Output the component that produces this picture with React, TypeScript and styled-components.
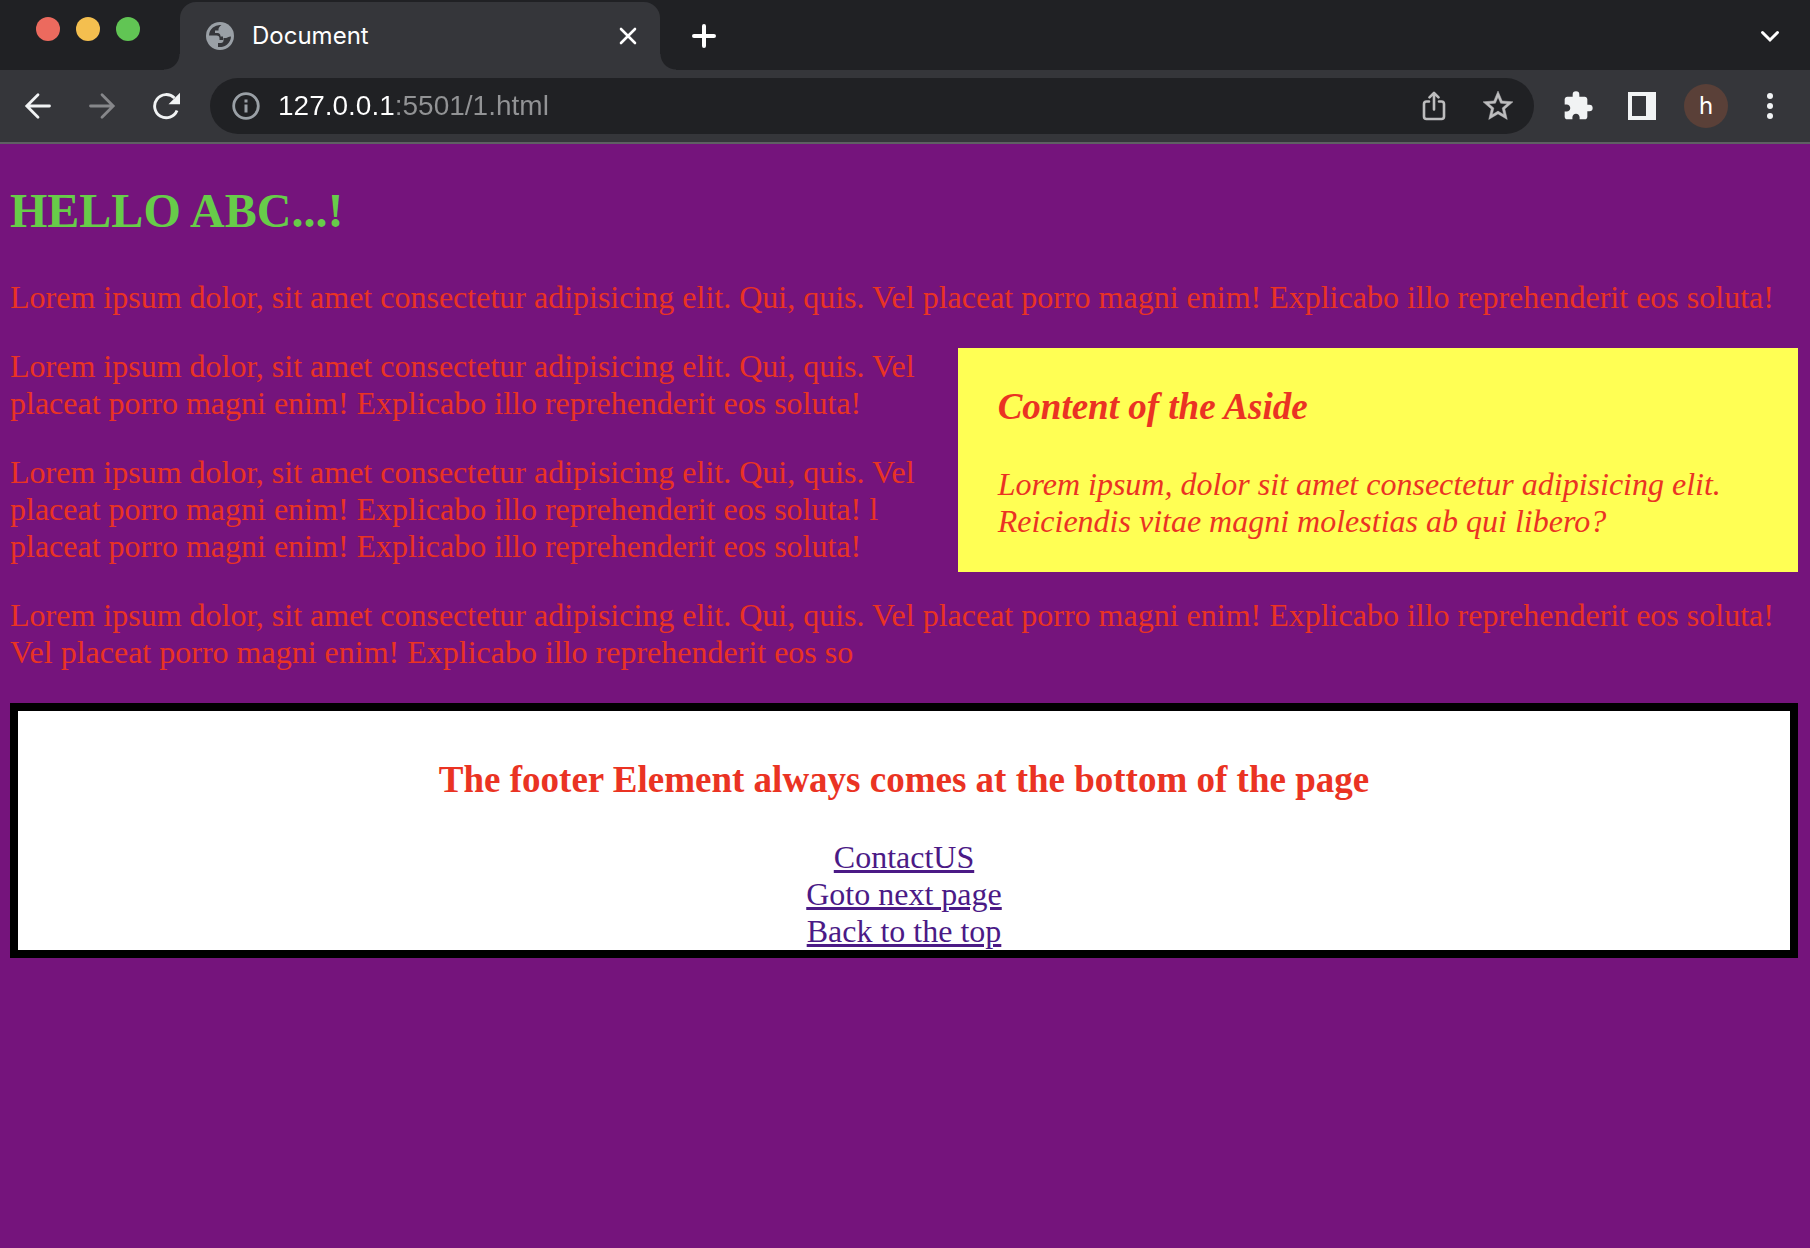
import React from "react";
import styled, { createGlobalStyle } from "styled-components";

const ui = '"Inter", "Liberation Sans", sans-serif';
const serif = '"Liberation Serif", "Times New Roman", serif';

const GlobalStyle = createGlobalStyle`
  *, *::before, *::after { box-sizing: border-box; }
  body { margin: 0; background: #75147c; }
`;

const TabStrip = styled.header`
  display: flex;
  height: 70px;
  background: #202124;
`;

const WindowControls = styled.div`
  display: flex;
  flex: none;
  gap: 16px;
  width: 180px;
  padding: 17px 0 0 36px;
`;

const Light = styled.button<{ $color: string }>`
  width: 24px;
  height: 24px;
  padding: 0;
  border: 0;
  border-radius: 50%;
  background: ${(p) => p.$color};
`;

const Tab = styled.div`
  position: relative;
  display: flex;
  align-items: center;
  flex: 0 1 480px;
  margin-top: 2px;
  padding: 0 12px 0 26px;
  border-radius: 16px 16px 0 0;
  background: #35363a;

  &::before,
  &::after {
    content: "";
    position: absolute;
    bottom: 0;
    width: 16px;
    height: 16px;
  }
  &::before {
    right: 100%;
    background: radial-gradient(circle at 0 0, #202124 15px, #35363a 16px);
  }
  &::after {
    left: 100%;
    background: radial-gradient(circle at 100% 0, #202124 15px, #35363a 16px);
  }
`;

const TabTitle = styled.span`
  flex: 1;
  margin-left: 18px;
  font: 400 24px/32px ${ui};
  color: #fff;
`;

const IconButton = styled.button<{ $width?: number; $color?: string }>`
  display: flex;
  align-items: center;
  justify-content: center;
  flex: none;
  width: ${(p) => p.$width ?? 64}px;
  height: 56px;
  padding: 0;
  border: 0;
  background: none;
  color: ${(p) => p.$color ?? "#f1f3f4"};
`;

const StripActions = styled.div`
  display: flex;
  flex: 1;
  align-items: center;
  justify-content: space-between;
  padding: 2px 8px 0 16px;
`;

const Toolbar = styled.nav`
  display: flex;
  align-items: center;
  height: 74px;
  padding: 0 8px 0 6px;
  border-bottom: 2px solid #5f6063;
  background: #35363a;
`;

const AddressBar = styled.form`
  display: flex;
  align-items: center;
  flex: 1;
  min-width: 0;
  height: 56px;
  margin: 0 12px;
  padding: 0 4px;
  border-radius: 28px;
  background: #202124;
`;

/* The host part of the address is white, the port and path are grey. */
const AddressInput = styled.input`
  flex: 1;
  min-width: 0;
  height: 36px;
  padding: 0;
  border: 0;
  outline: 0;
  font: 400 28px/36px "Liberation Sans", Arial, sans-serif;
  color: #9a9b9d;
  background: linear-gradient(to right, #fff 118px, #929395 118px);
  background-clip: text;
  -webkit-background-clip: text;
  -webkit-text-fill-color: transparent;
`;

const Avatar = styled.span`
  display: flex;
  align-items: center;
  justify-content: center;
  width: 44px;
  height: 44px;
  border-radius: 50%;
  background: #5a4038;
  font: 400 24px/32px ${ui};
  color: #fff;
`;

const Page = styled.main`
  padding: 0 12px 32px 10px;
  font: 400 32px/37px ${serif};
  color: #ea3323;
`;

const Title = styled.h1`
  margin: 0;
  padding: 39px 0 41px;
  font: 700 48px/55px ${serif};
  color: #67cc49;
`;

const Paragraph = styled.p`
  margin: 0 0 32px;
`;

const Subtitle = styled.h2`
  margin: 0;
  padding: 37px 0 38px;
  font-size: 37px;
  line-height: 43px;
  font-weight: 700;
`;

const Aside = styled.aside`
  float: right;
  width: 47%;
  padding: 0 40px;
  background: #ffff54;
  font-style: italic;
  display: flow-root;
`;

const Footer = styled.footer`
  clear: both;
  display: flex;
  flex-direction: column;
  align-items: center;
  padding-top: 10px;
  border: 8px solid #000;
  background: #fff;
  text-align: center;
`;

const FooterLink = styled.a`
  color: #4b1a86;
  text-decoration: underline;
`;

const LOREM =
  "Lorem ipsum dolor, sit amet consectetur adipisicing elit. Qui, quis. Vel placeat porro magni enim! Explicabo illo reprehenderit eos soluta!";

const LINKS = [
  { label: "ContactUS", href: "#contact" },
  { label: "Goto next page", href: "#next" },
  { label: "Back to the top", href: "#top" },
];

const GlobeIcon = () => (
  <svg width="28" height="28" viewBox="0 0 28 28" aria-hidden="true">
    <circle cx="14" cy="14" r="14" fill="#9aa0a6" />
    <path
      d="M15.500 3A11 11 0 0 0 3 13.500H10.500c2 0 3 1.200 3 3v1.500h3.500v-3.500h-2.500c0-2-1-3.500-3-3.500H9V8.500h3.500V7c0-1 1-2.500 3-4zM25 14.500A11 11 0 0 1 12 24.900V21h3c1.500 0 2.500-1 2.500-2.500V16h2.500c1.500 0 2-1.500 5-1.500z"
      fill="#35363a"
    />
  </svg>
);

const CloseIcon = () => (
  <svg width="18" height="18" viewBox="0 0 18 18" stroke="currentColor" strokeWidth="2.600" strokeLinecap="round" aria-hidden="true">
    <path d="M2 2l14 14M16 2L2 16" />
  </svg>
);

const PlusIcon = () => (
  <svg width="24" height="24" viewBox="0 0 24 24" stroke="currentColor" strokeWidth="4" strokeLinecap="round" aria-hidden="true">
    <path d="M12 2v20M2 12h20" />
  </svg>
);

const ChevronIcon = () => (
  <svg width="20" height="14" viewBox="0 0 20 14" fill="none" stroke="currentColor" strokeWidth="3" strokeLinecap="round" aria-hidden="true">
    <path d="M2.500 3.500L10 11l7.500-7.500" />
  </svg>
);

const ArrowIcon = ({ forward = false }: { forward?: boolean }) => (
  <svg width="28" height="28" viewBox="0 0 28 28" fill="none" stroke="currentColor" strokeWidth="2.800" strokeLinecap="round" aria-hidden="true">
    <path d={forward ? "M2.500 14h22M14 2.800L25.200 14 14 25.200" : "M25.500 14h-22M14 2.800L2.800 14 14 25.200"} />
  </svg>
);

const ReloadIcon = () => (
  <svg width="28" height="28" viewBox="0 0 28 28" fill="none" aria-hidden="true">
    <path d="M25 18.500A11.600 11.600 0 1 1 22.500 6" stroke="currentColor" strokeWidth="2.900" />
    <path d="M28 .8V12.300H16.500z" fill="currentColor" />
  </svg>
);

const InfoIcon = () => (
  <svg width="28" height="28" viewBox="0 0 28 28" fill="none" aria-hidden="true">
    <circle cx="14" cy="14" r="12.300" stroke="currentColor" strokeWidth="2.800" />
    <path d="M12.500 7.500h3v3h-3zM12.500 12.500h3v8h-3z" fill="currentColor" />
  </svg>
);

const ShareIcon = () => (
  <svg width="28" height="30" viewBox="0 0 28 30" fill="none" stroke="currentColor" strokeWidth="2.600" strokeLinecap="round" strokeLinejoin="round" aria-hidden="true">
    <path d="M9 10.500H6.500a2.500 2.500 0 0 0-2.500 2.500v12.500A2.500 2.500 0 0 0 6.500 28h15a2.500 2.500 0 0 0 2.500-2.500V13a2.500 2.500 0 0 0-2.500-2.500H19M14 18.500V2M9.500 6.300L14 1.800l4.500 4.500" />
  </svg>
);

const StarIcon = () => (
  <svg width="36" height="36" viewBox="0 0 24 24" fill="currentColor" stroke="currentColor" strokeWidth=".3" aria-hidden="true">
    <path d="M22 9.240l-7.190-.62L12 2 9.190 8.630 2 9.240l5.460 4.730L5.820 21 12 17.270 18.180 21l-1.630-7.030L22 9.240zM12 15.400l-3.760 2.270 1-4.280-3.320-2.880 4.380-.38L12 6.100l1.710 4.040 4.380.38-3.320 2.880 1 4.280L12 15.400z" />
  </svg>
);

const PuzzleIcon = () => (
  <svg width="32" height="32" viewBox="0 0 24 24" fill="currentColor" aria-hidden="true">
    <path d="M20.500 11H19V7c0-1.100-.9-2-2-2h-4V3.500a2.500 2.500 0 0 0-5 0V5H4c-1.100 0-1.990.9-1.990 2v3.800H3.500c1.490 0 2.700 1.210 2.700 2.700s-1.210 2.700-2.700 2.700H2V20c0 1.100.9 2 2 2h3.800v-1.500c0-1.490 1.210-2.700 2.700-2.700s2.700 1.210 2.700 2.700V22H17c1.100 0 2-.9 2-2v-4h1.500a2.500 2.500 0 0 0 0-5z" />
  </svg>
);

const PanelIcon = () => (
  <svg width="28" height="28" viewBox="0 0 28 28" aria-hidden="true">
    <path d="M0 0h28v28H0zM4 4v20h14V4z" fill="currentColor" fillRule="evenodd" />
  </svg>
);

const DotsIcon = () => (
  <svg width="6" height="26" viewBox="0 0 6 26" fill="currentColor" aria-hidden="true">
    <circle cx="3" cy="3" r="3" />
    <circle cx="3" cy="13" r="3" />
    <circle cx="3" cy="23" r="3" />
  </svg>
);

export default function App() {
  return (
    <>
      <GlobalStyle />
      <TabStrip>
        <WindowControls>
          <Light $color="#ec6a5e" aria-label="Close window" />
          <Light $color="#f4bf4f" aria-label="Minimize window" />
          <Light $color="#61c554" aria-label="Zoom window" />
        </WindowControls>
        <Tab>
          <GlobeIcon />
          <TabTitle>Document</TabTitle>
          <IconButton $width={40} $color="#fff" aria-label="Close tab">
            <CloseIcon />
          </IconButton>
        </Tab>
        <StripActions>
          <IconButton $width={56} $color="#fff" aria-label="New tab">
            <PlusIcon />
          </IconButton>
          <IconButton $color="#fff" aria-label="Search tabs">
            <ChevronIcon />
          </IconButton>
        </StripActions>
      </TabStrip>
      <Toolbar>
        <IconButton aria-label="Back">
          <ArrowIcon />
        </IconButton>
        <IconButton $color="#86878a" aria-label="Forward">
          <ArrowIcon forward />
        </IconButton>
        <IconButton aria-label="Reload">
          <ReloadIcon />
        </IconButton>
        <AddressBar>
          <IconButton type="button" $color="#9aa0a6" aria-label="Site information">
            <InfoIcon />
          </IconButton>
          <AddressInput aria-label="Address" defaultValue="127.0.0.1:5501/1.html" />
          <IconButton type="button" $color="#bdbdbe" aria-label="Share">
            <ShareIcon />
          </IconButton>
          <IconButton type="button" $color="#bdbdbe" aria-label="Bookmark">
            <StarIcon />
          </IconButton>
        </AddressBar>
        <IconButton aria-label="Extensions">
          <PuzzleIcon />
        </IconButton>
        <IconButton aria-label="Side panel">
          <PanelIcon />
        </IconButton>
        <IconButton aria-label="Profile">
          <Avatar>h</Avatar>
        </IconButton>
        <IconButton aria-label="Menu">
          <DotsIcon />
        </IconButton>
      </Toolbar>
      <Page>
        <Title>HELLO ABC...!</Title>
        <Paragraph>{LOREM}</Paragraph>
        <Aside>
          <Subtitle>Content of the Aside</Subtitle>
          <Paragraph>
            Lorem ipsum, dolor sit amet consectetur adipisicing elit. Reiciendis vitae magni molestias ab qui libero?
          </Paragraph>
        </Aside>
        <Paragraph>{LOREM}</Paragraph>
        <Paragraph>
          {LOREM} l placeat porro magni enim! Explicabo illo reprehenderit eos soluta!
        </Paragraph>
        <Paragraph>
          {LOREM} Vel placeat porro magni enim! Explicabo illo reprehenderit eos so
        </Paragraph>
        <Footer>
          <Subtitle>The footer Element always comes at the bottom of the page</Subtitle>
          {LINKS.map((link) => (
            <FooterLink key={link.label} href={link.href}>
              {link.label}
            </FooterLink>
          ))}
        </Footer>
      </Page>
    </>
  );
}
